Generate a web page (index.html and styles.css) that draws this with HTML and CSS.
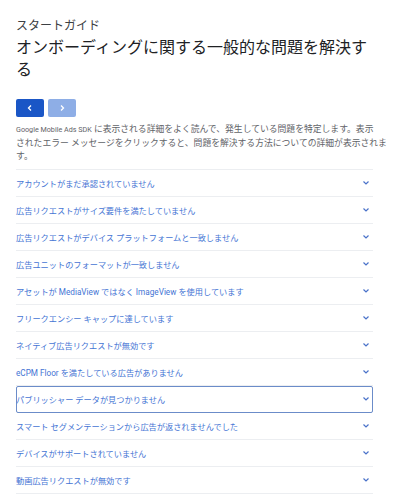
FILE: index.html
```html
<!DOCTYPE html>
<html lang="ja">
<head>
<meta charset="utf-8">
<link rel="stylesheet" href="styles.css">
</head>
<body>
<div class="page">
  <div class="eyebrow">スタートガイド</div>
  <h1 class="title">オンボーディングに関する一般的な問題を解決する</h1>
  <div class="nav">
    <button class="btn btn-prev" aria-label="前へ">
      <svg width="8" height="8" viewBox="0 0 8 8"><path d="M5 1.5 L2.5 4 L5 6.5" fill="none" stroke="#fff" stroke-width="1.3"/></svg>
    </button>
    <button class="btn btn-next" aria-label="次へ">
      <svg width="8" height="8" viewBox="0 0 8 8"><path d="M3 1.5 L5.5 4 L3 6.5" fill="none" stroke="#fff" stroke-width="1.3"/></svg>
    </button>
  </div>
  <p class="intro"><span class="en">Google Mobile Ads SDK</span> に表示される詳細をよく読んで、発生している問題を特定します。表示<br>されたエラー メッセージをクリックすると、問題を解決する方法についての詳細が表示されま<br>す。</p>
  <ul class="list">
    <li class="row"><span>アカウントがまだ承認されていません</span><svg class="chev" viewBox="0 0 8 6"><path d="M1.5 1.5 L4 4 L6.5 1.5" fill="none" stroke="#4a72c9" stroke-width="1.2"/></svg></li>
    <li class="row"><span>広告リクエストがサイズ要件を満たしていません</span><svg class="chev" viewBox="0 0 8 6"><path d="M1.5 1.5 L4 4 L6.5 1.5" fill="none" stroke="#4a72c9" stroke-width="1.2"/></svg></li>
    <li class="row"><span>広告リクエストがデバイス プラットフォームと一致しません</span><svg class="chev" viewBox="0 0 8 6"><path d="M1.5 1.5 L4 4 L6.5 1.5" fill="none" stroke="#4a72c9" stroke-width="1.2"/></svg></li>
    <li class="row"><span>広告ユニットのフォーマットが一致しません</span><svg class="chev" viewBox="0 0 8 6"><path d="M1.5 1.5 L4 4 L6.5 1.5" fill="none" stroke="#4a72c9" stroke-width="1.2"/></svg></li>
    <li class="row"><span>アセットが MediaView ではなく ImageView を使用しています</span><svg class="chev" viewBox="0 0 8 6"><path d="M1.5 1.5 L4 4 L6.5 1.5" fill="none" stroke="#4a72c9" stroke-width="1.2"/></svg></li>
    <li class="row"><span>フリークエンシー キャップに達しています</span><svg class="chev" viewBox="0 0 8 6"><path d="M1.5 1.5 L4 4 L6.5 1.5" fill="none" stroke="#4a72c9" stroke-width="1.2"/></svg></li>
    <li class="row"><span>ネイティブ広告リクエストが無効です</span><svg class="chev" viewBox="0 0 8 6"><path d="M1.5 1.5 L4 4 L6.5 1.5" fill="none" stroke="#4a72c9" stroke-width="1.2"/></svg></li>
    <li class="row"><span>eCPM Floor を満たしている広告がありません</span><svg class="chev" viewBox="0 0 8 6"><path d="M1.5 1.5 L4 4 L6.5 1.5" fill="none" stroke="#4a72c9" stroke-width="1.2"/></svg></li>
    <li class="row focused"><span>パブリッシャー データが見つかりません</span><svg class="chev" viewBox="0 0 8 6"><path d="M1.5 1.5 L4 4 L6.5 1.5" fill="none" stroke="#4a72c9" stroke-width="1.2"/></svg></li>
    <li class="row"><span>スマート セグメンテーションから広告が返されませんでした</span><svg class="chev" viewBox="0 0 8 6"><path d="M1.5 1.5 L4 4 L6.5 1.5" fill="none" stroke="#4a72c9" stroke-width="1.2"/></svg></li>
    <li class="row"><span>デバイスがサポートされていません</span><svg class="chev" viewBox="0 0 8 6"><path d="M1.5 1.5 L4 4 L6.5 1.5" fill="none" stroke="#4a72c9" stroke-width="1.2"/></svg></li>
    <li class="row"><span>動画広告リクエストが無効です</span><svg class="chev" viewBox="0 0 8 6"><path d="M1.5 1.5 L4 4 L6.5 1.5" fill="none" stroke="#4a72c9" stroke-width="1.2"/></svg></li>
  </ul>
</div>
</body>
</html>
```

FILE: styles.css
```css
html, body {
  margin: 0;
  padding: 0;
  background: #ffffff;
}
body {
  font-family: Roboto, "Noto Sans CJK JP", sans-serif;
  color: #3c4043;
}
.page {
  width: 357px;
  padding: 18px 0 0 16px;
}
.eyebrow {
  font-size: 12px;
  line-height: 16px;
  color: #3c4043;
}
.title {
  margin: 3px 0 0 0;
  font-size: 16px;
  line-height: 22px;
  font-weight: 400;
  color: #202124;
  width: 362px;
}
.nav {
  display: flex;
  gap: 4px;
  margin-top: 18px;
}
.btn {
  width: 28px;
  height: 18px;
  border: none;
  border-radius: 2px;
  padding: 0;
  display: flex;
  align-items: center;
  justify-content: center;
}
.btn-prev {
  background: #1a56c6;
}
.btn-next {
  background: #8eaee6;
}
.intro {
  margin: 6px 0 0 0;
  font-size: 8.8px;
  line-height: 13.5px;
  color: #5f6368;
  width: 372px;
}
.intro .en {
  font-size: 7.2px;
}
.list {
  list-style: none;
  margin: 5px 0 0 0;
  padding: 0;
  border-top: 1px solid #eceef1;
}
.row {
  height: 26px;
  border-bottom: 1px solid #eceef1;
  display: flex;
  align-items: center;
  justify-content: space-between;
  font-size: 8.2px;
  color: #4474d4;
  box-sizing: content-box;
}
.row span {
  white-space: nowrap;
}
.chev {
  width: 8px;
  height: 6px;
  margin-right: 3px;
}
.focused {
  outline: 1.5px solid #6b8cc9;
  outline-offset: -1px;
  border-radius: 2px;
}
```
